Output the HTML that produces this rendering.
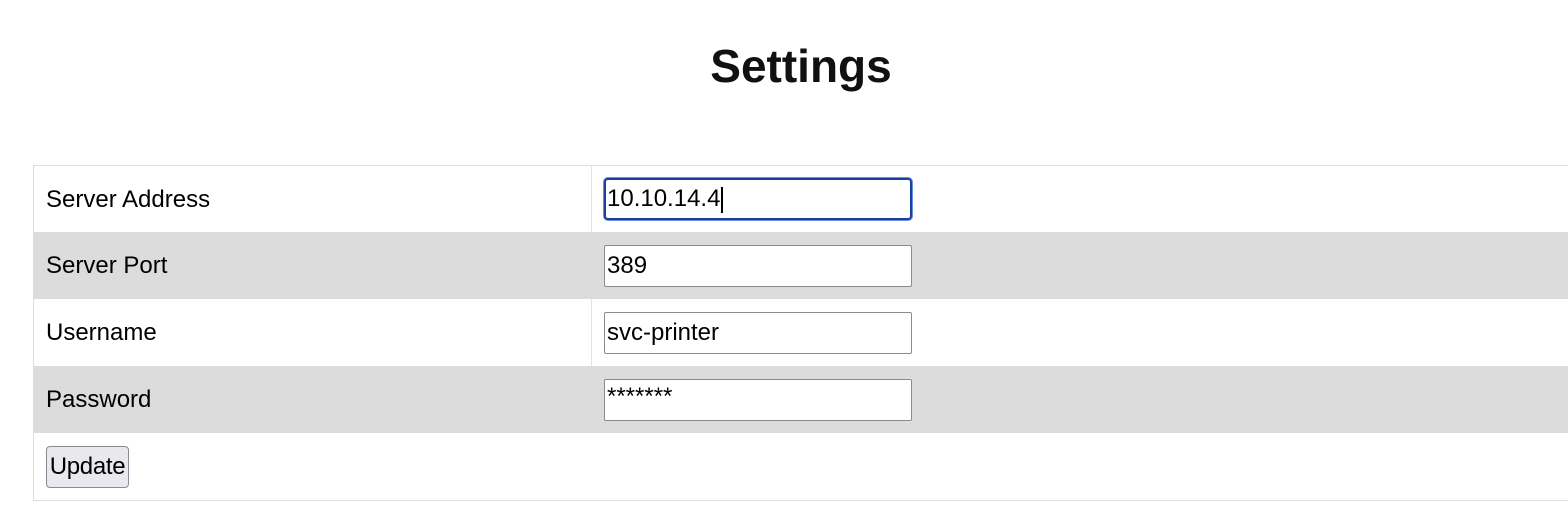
<!DOCTYPE html>
<html><head><style>
body{margin:0;width:1568px;height:509px;overflow:hidden;background:#fff;font-family:"Liberation Sans",sans-serif;color:#000;position:relative}
h1{position:absolute;top:39px;left:0;width:1602px;text-align:center;margin:0;font-size:46px;font-weight:bold;letter-spacing:0px;color:#111}
.tbl{position:absolute;left:33px;top:165px;width:1600px;height:336px;border:1px solid #ddd;box-sizing:border-box}
.row{position:absolute;left:0;right:0;height:67px}
.g{background:#dcdcdc}
.lbl{position:absolute;left:12px;top:0;line-height:67px;font-size:24px}
.div{position:absolute;left:557px;top:0;width:1px;height:100%;background:#e4e4e4}
.inp{position:absolute;left:570px;top:13px;width:308px;height:42px;box-sizing:border-box;border:1px solid #8a8a95;border-radius:2px;background:#fff;font-size:24px;line-height:40px;padding-left:2px}
.foc{top:12px;border:2px solid #1b3f9e;border-radius:4px;box-shadow:0 0 0 1px #6b8ee0;line-height:38px;padding-left:1px}
.btn{position:absolute;left:12px;top:13px;width:83px;height:42px;box-sizing:border-box;border:1px solid #8a8a95;border-radius:4px;background:#e9e9ed;font-size:24px;line-height:40px;text-align:center;letter-spacing:-0.3px}
</style></head><body>
<h1>Settings</h1>
<div class="tbl">
<div class="row" style="top:0"><div class="lbl">Server Address</div><div class="div"></div><div class="inp foc">10.10.14.4<span style="border-left:2px solid #000;margin-left:1px;display:inline-block;height:26px;vertical-align:middle"></span></div></div>
<div class="row g" style="top:66px"><div class="lbl">Server Port</div><div class="inp">389</div></div>
<div class="row" style="top:133px"><div class="lbl">Username</div><div class="div"></div><div class="inp">svc-printer</div></div>
<div class="row g" style="top:200px"><div class="lbl">Password</div><div class="inp" style="line-height:34px">*******</div></div>
<div class="row" style="top:267px"><div class="btn">Update</div></div>
</div>
</body></html>
